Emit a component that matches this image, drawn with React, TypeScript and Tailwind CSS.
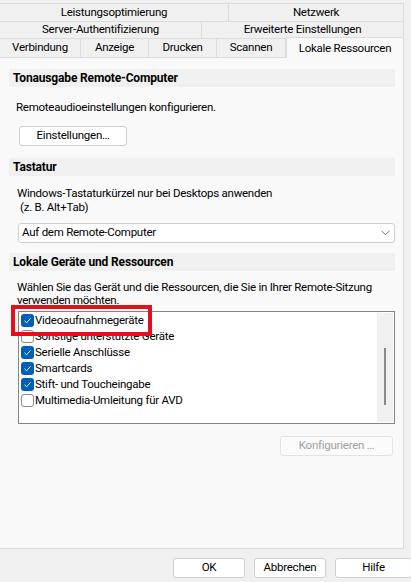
import React from "react"

const font = "font-['Roboto','Liberation_Sans',sans-serif]"

function Tab({ label, w, selected = false }: { label: string; w: string; selected?: boolean }) {
  if (selected) {
    return (
      <div className={`${w} h-[21px] -mt-[2px] -mb-[1px] relative z-10 flex items-start justify-center pt-[2px] bg-[#f9f9f9] border-l border-t border-r border-[#dcdcdc]`}>
        {label}
      </div>
    )
  }
  return (
    <div className={`${w} h-full flex items-center justify-center border-t border-r border-[#dcdcdc] bg-[#f0f0f0]`}>
      {label}
    </div>
  )
}

function SectionHeader({ children }: { children: React.ReactNode }) {
  return (
    <div className="mx-[9px] w-[386px] h-[18px] bg-[#f0f0f0] flex items-center pl-[4px] font-bold text-[12px] tracking-[-0.15px]">
      {children}
    </div>
  )
}

function Check({ checked }: { checked: boolean }) {
  if (checked) {
    return (
      <span className="w-[13px] h-[13px] rounded-[3px] bg-[#005fb8] flex items-center justify-center shrink-0">
        <svg width="9" height="9" viewBox="0 0 9 9" fill="none">
          <path d="M1.5 4.8 L3.6 6.8 L7.6 2.2" stroke="#ffffff" strokeWidth="0.9" />
        </svg>
      </span>
    )
  }
  return <span className="w-[13px] h-[13px] rounded-[3px] bg-white border border-[#8a8a8a] shrink-0" />
}

const items = [
  { label: "Videoaufnahmegeräte", checked: true },
  { label: "Sonstige unterstützte Geräte", checked: false },
  { label: "Serielle Anschlüsse", checked: true },
  { label: "Smartcards", checked: true },
  { label: "Stift- und Toucheingabe", checked: true },
  { label: "Multimedia-Umleitung für AVD", checked: false },
]

export default function App() {
  return (
    <div className={`w-[411px] h-[582px] bg-[#f0f0f0] text-[11.5px] tracking-[-0.25px] text-black flex flex-col overflow-hidden ${font}`}>
      {/* tab rows */}
      <div className="w-[404px] pt-[3px] flex flex-col">
        <div className="h-[18px] flex">
          <Tab label="Leistungsoptimierung" w="w-[229px]" />
          <Tab label="Netzwerk" w="w-[175px]" />
        </div>
        <div className="h-[17px] flex">
          <Tab label="Server-Authentifizierung" w="w-[202px]" />
          <Tab label="Erweiterte Einstellungen" w="w-[202px]" />
        </div>
        <div className="h-[19px] flex items-end">
          <Tab label="Verbindung" w="w-[81px]" />
          <Tab label="Anzeige" w="w-[68px]" />
          <Tab label="Drucken" w="w-[68px]" />
          <Tab label="Scannen" w="w-[69px]" />
          <Tab label="Lokale Ressourcen" w="w-[118px]" selected />
        </div>
      </div>

      {/* panel */}
      <div className="w-[404px] h-[492px] bg-[#f9f9f9] border-t border-r border-b border-[#dcdcdc] flex flex-col pt-[11px]">
        <SectionHeader>Tonausgabe Remote-Computer</SectionHeader>
        <div className="pl-[16px] mt-[12px] h-[16px] leading-[16px]">Remoteaudioeinstellungen konfigurieren.</div>
        <div className="pl-[19px] mt-[11px] h-[20px]">
          <button className="w-[108px] h-[20px] bg-white border border-[#d0d0d0] rounded-[3px] leading-none">
            Einstellungen…
          </button>
        </div>

        <div className="mt-[12px]">
          <SectionHeader>Tastatur</SectionHeader>
        </div>
        <div className="pl-[17px] mt-[10px] leading-[14px]">
          <div>Windows-Tastaturkürzel nur bei Desktops anwenden</div>
          <div className="pl-[3px]">(z. B. Alt+Tab)</div>
        </div>
        <div className="ml-[18px] mt-[9px] w-[377px] h-[20px] shrink-0 bg-white border border-[#d0d0d0] rounded-[3px] flex items-center justify-between pl-[3px] pr-[4px]">
          <span>Auf dem Remote-Computer</span>
          <svg width="9" height="6" viewBox="0 0 9 6" fill="none">
            <path d="M0.5 0.8 L4.5 4.8 L8.5 0.8" stroke="#666666" strokeWidth="0.9" />
          </svg>
        </div>

        <div className="mt-[10px]">
          <SectionHeader>Lokale Geräte und Ressourcen</SectionHeader>
        </div>
        <div className="pl-[17px] mt-[10px] leading-[13px] w-[392px] h-[26px]">
          Wählen Sie das Gerät und die Ressourcen, die Sie in Ihrer Remote-Sitzung verwenden möchten.
        </div>

        <div className="ml-[18px] mt-[4px] w-[377px] h-[113px] shrink-0 bg-white border border-[#858585] flex relative">
          <div className="flex-1 flex flex-col pl-[2px]">
            {items.map((it) => (
              <div key={it.label} className="h-[16px] flex items-center gap-[1px]">
                <Check checked={it.checked} />
                <span className="leading-[16px]">{it.label}</span>
              </div>
            ))}
          </div>
          <div className="w-[16px] my-[1px] mr-[1px] bg-[#f0f0f0] flex justify-center pt-[35px]">
            <div className="w-[2px] h-[57px] bg-[#8a8a8a]" />
          </div>
          {/* highlight marker drawn over the list */}
          <div className="absolute -left-[8px] -top-[7px] w-[141px] h-[31px] border-[4px] border-[#e3101b] pointer-events-none" />
        </div>

        <div className="flex justify-end pr-[10px] mt-[12px]">
          <button className="w-[113px] h-[20px] bg-[#fbfbfb] border border-[#e3e3e3] rounded-[3px] text-[#a0a0a0] leading-none">
            Konfigurieren …
          </button>
        </div>
      </div>

      {/* footer */}
      <div className="flex justify-end gap-[9px] pt-[9px] -mr-[1px]">
        <button className="w-[72px] h-[20px] bg-white border border-[#d0d0d0] rounded-[3px] leading-none">OK</button>
        <button className="w-[72px] h-[20px] bg-white border border-[#d0d0d0] rounded-[3px] leading-none">Abbrechen</button>
        <button className="w-[77px] h-[20px] bg-white border border-[#d0d0d0] rounded-[3px] leading-none">Hilfe</button>
      </div>
    </div>
  )
}
